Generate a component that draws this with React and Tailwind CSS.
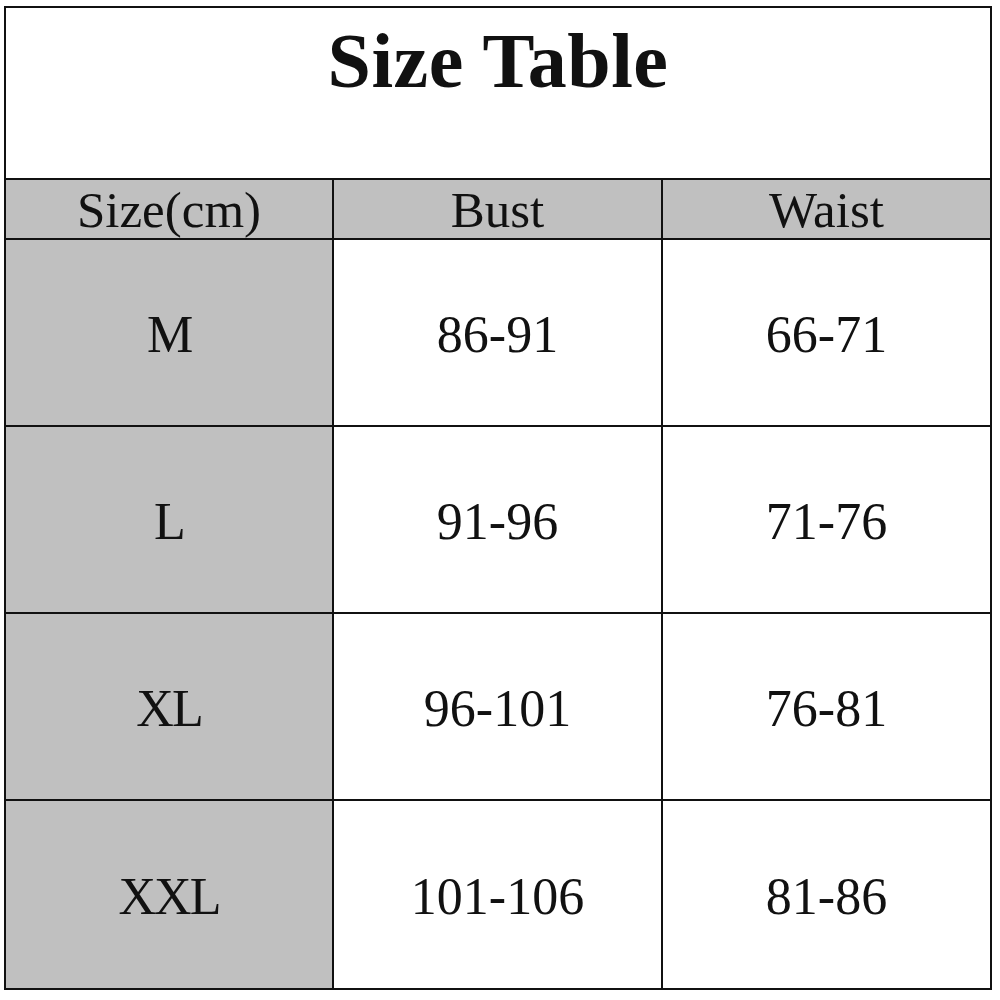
const HEAD = ['Size(cm)', 'Bust', 'Waist']
const ROWS = [
  ['M', '86-91', '66-71'],
  ['L', '91-96', '71-76'],
  ['XL', '96-101', '76-81'],
  ['XXL', '101-106', '81-86'],
]

export default function App() {
  return (
    <div className="w-[1000px] h-[1000px] bg-white pt-[6px] pl-[4px]" style={{ fontFamily: '"Liberation Serif", "Times New Roman", serif' }}>
      <div className="w-[988px] border-2 border-[#111] text-[#111]">
        {/* title */}
        <div className="h-[172px] border-b-2 border-[#111] pt-[14px] text-center">
          <h1 className="text-[78px] leading-none font-bold tracking-[0.5px]">Size Table</h1>
        </div>

        <div className="grid grid-cols-[328px_329px_1fr]">
          {HEAD.map((h, i) => (
            <div key={h}
              className={`h-[60px] pt-[3px] bg-[#c0c0c0] flex items-center justify-center text-[51px] leading-none border-b-2 border-[#111] ${i < 2 ? 'border-r-2' : ''}`}>
              {h}
            </div>
          ))}
          {ROWS.map((r, ri) => r.map((c, ci) => (
            <div key={ri + '-' + ci}
              className={`h-[187px] pt-[4px] flex items-center justify-center text-[52px] leading-none border-[#111]
                ${ci === 0 ? 'bg-[#c0c0c0] tracking-[-2px]' : 'bg-white'}
                ${ci < 2 ? 'border-r-2' : ''}
                ${ri < ROWS.length - 1 ? 'border-b-2' : ''}`}>
              {c}
            </div>
          )))}
        </div>
      </div>
    </div>
  )
}
